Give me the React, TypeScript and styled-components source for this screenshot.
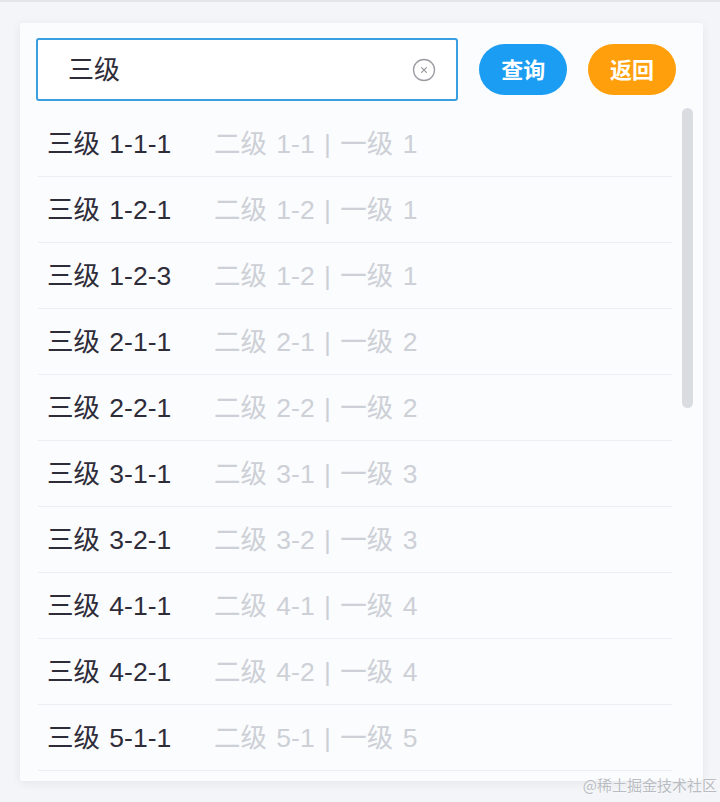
import React from 'react';
import styled, { createGlobalStyle } from 'styled-components';

interface Item {
  name: string;
  parent: string;
  root: string;
}

const items: Item[] = [
  { name: '三级 1-1-1', parent: '二级 1-1', root: '一级 1' },
  { name: '三级 1-2-1', parent: '二级 1-2', root: '一级 1' },
  { name: '三级 1-2-3', parent: '二级 1-2', root: '一级 1' },
  { name: '三级 2-1-1', parent: '二级 2-1', root: '一级 2' },
  { name: '三级 2-2-1', parent: '二级 2-2', root: '一级 2' },
  { name: '三级 3-1-1', parent: '二级 3-1', root: '一级 3' },
  { name: '三级 3-2-1', parent: '二级 3-2', root: '一级 3' },
  { name: '三级 4-1-1', parent: '二级 4-1', root: '一级 4' },
  { name: '三级 4-2-1', parent: '二级 4-2', root: '一级 4' },
  { name: '三级 5-1-1', parent: '二级 5-1', root: '一级 5' },
];

const GlobalStyle = createGlobalStyle`
  html, body {
    margin: 0;
    padding: 0;
    background: #f4f5f8;
    font-family: "Liberation Sans", "Noto Sans CJK SC", sans-serif;
  }
`;

const Page = styled.div`
  position: relative;
  height: 802px;
  border-top: 2px solid #e3e5e9;
  box-sizing: border-box;
  padding: 21px 0 0 20px;
  overflow: hidden;
`;

const Card = styled.div`
  width: 683px;
  box-sizing: border-box;
  padding: 15px 10px 10px 16px;
  background: #fbfcfe;
  border-radius: 3px;
  box-shadow: 0 2px 10px rgba(40, 50, 70, 0.08);
`;

const Header = styled.div`
  display: flex;
  align-items: center;
  gap: 21px;
  padding-right: 17px;
`;

const SearchBox = styled.div`
  display: flex;
  align-items: center;
  width: 423px;
  height: 63px;
  box-sizing: border-box;
  border: 2px solid #3a9fe0;
  border-radius: 3px;
  background: #fff;
  padding: 0 20px 0 30px;
`;

const SearchText = styled.span`
  flex: 1;
  font-size: 26px;
  color: #2e2c38;
  padding-bottom: 5px;
`;

const ClearIcon = styled.svg`
  width: 24px;
  height: 24px;
  flex-shrink: 0;
`;

const PillButton = styled.button<{ $tone: 'blue' | 'orange' }>`
  width: 88px;
  height: 51px;
  border: none;
  border-radius: 26px;
  background: ${p => (p.$tone === 'blue' ? '#1a9df2' : '#ff9f0b')};
  color: #fff;
  font-family: "Noto Sans CJK SC", sans-serif;
  font-size: 22px;
  font-weight: 700;
  padding: 0 0 4px;
  cursor: pointer;
`;

const Body = styled.div`
  display: flex;
  align-items: flex-start;
  margin-top: 6px;
`;

const List = styled.div`
  width: 634px;
  margin-left: 2px;
  padding-top: 4px;
`;

const Row = styled.div`
  display: flex;
  align-items: center;
  height: 65px;
  box-sizing: content-box;
  border-bottom: 1px solid #eceef2;
  padding-left: 9px;
  font-size: 26.5px;
  word-spacing: 2px;
`;

const Name = styled.span`
  width: 167px;
  flex-shrink: 0;
  color: #2e2c38;
  padding-bottom: 5px;
`;

const Path = styled.span`
  color: #cdd0d6;
  padding-bottom: 5px;
`;

const ScrollTrack = styled.div`
  margin: 1px 0 0 10px;
  width: 11px;
`;

const ScrollThumb = styled.div`
  height: 300px;
  border-radius: 6px;
  background: #d9dce1;
`;

const Watermark = styled.div`
  position: absolute;
  right: 3px;
  bottom: 7px;
  font-family: "Noto Sans CJK SC", sans-serif;
  font-size: 15px;
  color: #b9bcc2;
  text-shadow: 0 0 2px #fff;
`;

const App: React.FC = () => {
  return (
    <>
      <GlobalStyle />
      <Page>
        <Card>
          <Header>
            <SearchBox>
              <SearchText>三级</SearchText>
              <ClearIcon viewBox="0 0 24 24">
                <circle cx="12" cy="12" r="10.5" fill="none" stroke="#9a9ca2" strokeWidth="1.3" />
                <path d="M9.6 9.6l4.8 4.8M14.4 9.6l-4.8 4.8" stroke="#9a9ca2" strokeWidth="1.3" strokeLinecap="round" />
              </ClearIcon>
            </SearchBox>
            <PillButton $tone="blue">查询</PillButton>
            <PillButton $tone="orange">返回</PillButton>
          </Header>
          <Body>
            <List>
              {items.map(item => (
                <Row key={item.name}>
                  <Name>{item.name}</Name>
                  <Path>
                    {item.parent} | {item.root}
                  </Path>
                </Row>
              ))}
            </List>
            <ScrollTrack>
              <ScrollThumb />
            </ScrollTrack>
          </Body>
        </Card>
        <Watermark>@稀土掘金技术社区</Watermark>
      </Page>
    </>
  );
};

export default App;
